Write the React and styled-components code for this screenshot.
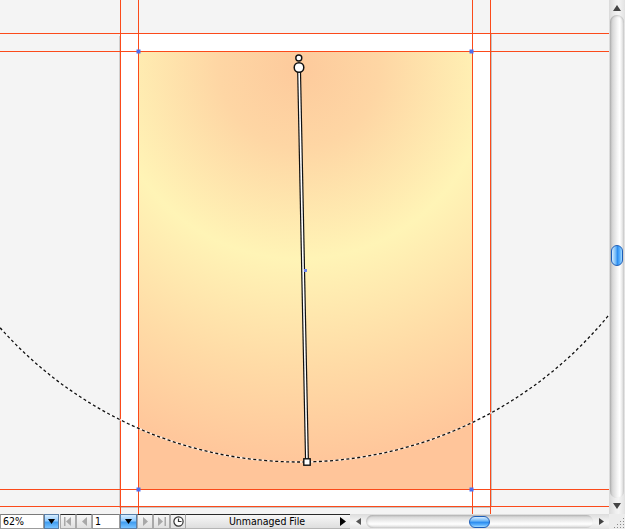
import React from "react";
import styled, { createGlobalStyle } from "styled-components";

const Global = createGlobalStyle`
  html, body { margin: 0; padding: 0; background: #f4f4f4; }
  body { font-family: "DejaVu Sans Condensed", "DejaVu Sans", sans-serif; }
`;

const GUIDE = "#fb4a1a";

const Root = styled.div`
  width: 625px;
  height: 529px;
  display: flex;
  flex-direction: column;
  overflow: hidden;
  background: #f4f4f4;
`;

const Main = styled.div`
  display: flex;
  height: 514px;
`;

const Canvas = styled.div`
  position: relative;
  width: 609px;
  height: 514px;
  overflow: hidden;
  background: #f4f4f4;
`;

const Page = styled.div`
  position: absolute;
  left: 120px;
  top: 34px;
  width: 370px;
  height: 472px;
  background: #fff;
  box-shadow: 2px 0 0 #c4c4c4, 0 2px 0 #c4c4c4, -1px 2px 0 #d0d0d0;
`;

const Art = styled.svg`
  position: absolute;
  left: 138px;
  top: 51px;
  display: block;
`;

const VGuide = styled.div`
  position: absolute;
  top: 0;
  bottom: 0;
  left: ${(p) => p.$x}px;
  width: 1px;
  background: ${GUIDE};
`;

const HGuide = styled.div`
  position: absolute;
  left: 0;
  right: 0;
  top: ${(p) => p.$y}px;
  height: 1px;
  background: ${GUIDE};
`;

const Overlay = styled.svg`
  position: absolute;
  left: 0;
  top: 0;
  display: block;
  pointer-events: none;
`;

const VScroll = styled.div`
  width: 16px;
  height: 514px;
  display: flex;
  flex-direction: column;
  align-items: center;
  background: linear-gradient(90deg, #dadada 0%, #eeeeee 40%, #f4f4f4 60%, #e2e2e2 100%);
`;

const ArrowCell = styled.div`
  width: 16px;
  height: ${(p) => p.$h || 15}px;
  display: flex;
  align-items: center;
  justify-content: center;
  flex: none;
`;

const VTrack = styled.div`
  flex: 1;
  width: 14px;
  border-radius: 7px;
  background: linear-gradient(90deg, #b9b9b9 0%, #d9d9d9 20%, #f6f6f6 55%, #ffffff 70%, #d6d6d6 100%);
  box-shadow: inset 0 1px 2px rgba(0, 0, 0, 0.2);
  display: flex;
  flex-direction: column;
  align-items: center;
  padding-top: 230px;
  box-sizing: border-box;
`;

const Thumb = styled.div`
  width: ${(p) => (p.$horizontal ? 21 : 12)}px;
  height: ${(p) => (p.$horizontal ? 12 : 21)}px;
  border-radius: 7px;
  border: 1px solid #1d5eb8;
  box-sizing: border-box;
  background: ${(p) =>
    p.$horizontal
      ? "linear-gradient(180deg, #d6ecff 0%, #79bdf8 35%, #2f8ff0 55%, #5fb4ff 80%, #a8dcff 100%)"
      : "linear-gradient(90deg, #d6ecff 0%, #79bdf8 35%, #2f8ff0 55%, #5fb4ff 80%, #a8dcff 100%)"};
  flex: none;
`;

const StatusBar = styled.div`
  display: flex;
  height: 15px;
  background: #e8e8e8;
  font-family: "DejaVu Sans Condensed", "DejaVu Sans", sans-serif;
  font-size: 10.5px;
  color: #000;
`;

const Field = styled.div`
  width: ${(p) => p.$w}px;
  height: 15px;
  box-sizing: border-box;
  background: #fff;
  border: 1px solid #9c9c9c;
  border-top-color: #7a7a7a;
  padding-left: 2px;
  line-height: 13px;
  flex: none;
`;

const BlueBtn = styled.div`
  width: ${(p) => p.$w}px;
  height: 15px;
  box-sizing: border-box;
  border: 1px solid #5a7ea6;
  background: linear-gradient(180deg, #d8eeff 0%, #8fcaff 45%, #3f9cf0 55%, #78c2ff 100%);
  display: flex;
  align-items: center;
  justify-content: center;
  flex: none;
`;

const NavBtn = styled.div`
  width: ${(p) => p.$w}px;
  height: 15px;
  box-sizing: border-box;
  border: 1px solid #a9a9a9;
  border-top-color: #2a2a2a;
  background: linear-gradient(180deg, #f6f6f6 0%, #e0e0e0 100%);
  display: flex;
  align-items: center;
  justify-content: center;
  flex: none;
`;

const Spacer = styled.div`
  width: ${(p) => p.$w}px;
  flex: none;
  background: #f0f0f0;
`;

const StatusField = styled.div`
  width: 164px;
  height: 15px;
  box-sizing: border-box;
  border-top: 1px solid #2a2a2a;
  border-bottom: 1px solid #b5b5b5;
  background: linear-gradient(180deg, #f7f7f7 0%, #dedede 100%);
  display: flex;
  align-items: center;
  padding: 0 4px 0 0;
  flex: none;
`;

const StatusText = styled.span`
  flex: 1;
  text-align: center;
  line-height: 13px;
  padding-left: 8px;
`;

const HScroll = styled.div`
  width: 259px;
  height: 15px;
  display: flex;
  align-items: center;
  background: linear-gradient(180deg, #dcdcdc 0%, #efefef 40%, #f5f5f5 60%, #e2e2e2 100%);
  flex: none;
`;

const HTrack = styled.div`
  flex: 1;
  height: 13px;
  border-radius: 7px;
  background: linear-gradient(180deg, #bdbdbd 0%, #dcdcdc 20%, #f6f6f6 55%, #ffffff 70%, #d6d6d6 100%);
  box-shadow: inset 1px 0 2px rgba(0, 0, 0, 0.2);
  display: flex;
  align-items: center;
  padding-left: 103px;
  box-sizing: border-box;
`;

const Corner = styled.div`
  width: 16px;
  height: 15px;
  background: #ececec;
  flex: none;
  display: flex;
  align-items: flex-end;
  justify-content: flex-end;
`;

const Tri = ({ dir, color = "#000", w = 7, h = 5 }) => {
  const pts = {
    down: `0,0 ${w},0 ${w / 2},${h}`,
    up: `0,${h} ${w},${h} ${w / 2},0`,
    right: `0,0 ${h},${w / 2} 0,${w}`,
    left: `${h},0 0,${w / 2} ${h},${w}`,
  }[dir];
  const horiz = dir === "left" || dir === "right";
  return (
    <svg width={horiz ? h : w} height={horiz ? w : h} style={{ display: "block" }}>
      <polygon points={pts} fill={color} />
    </svg>
  );
};

const FirstIcon = () => (
  <svg width="8" height="9" style={{ display: "block" }}>
    <rect x="0" y="0" width="1.5" height="9" fill="#a8a8a8" />
    <polygon points="7,0 2,4.5 7,9" fill="#a8a8a8" />
  </svg>
);
const LastIcon = () => (
  <svg width="8" height="9" style={{ display: "block" }}>
    <polygon points="0,0 5,4.5 0,9" fill="#a8a8a8" />
    <rect x="6.5" y="0" width="1.5" height="9" fill="#a8a8a8" />
  </svg>
);
const ClockIcon = () => (
  <svg width="11" height="11" style={{ display: "block" }}>
    <circle cx="5.5" cy="5.5" r="4.6" fill="#fff" stroke="#333" strokeWidth="1.2" />
    <path d="M5.5 2.5 V5.5 H8.5" fill="none" stroke="#333" strokeWidth="1.2" />
  </svg>
);
const Grip = () => (
  <svg width="12" height="12" style={{ display: "block" }}>
    {[
      [10, 2], [10, 5], [7, 5], [10, 8], [7, 8], [4, 8], [10, 11], [7, 11], [4, 11], [1, 11],
    ].map(([x, y], i) => (
      <rect key={i} x={x} y={y - 1} width="1" height="1" fill="#8a8a8a" />
    ))}
  </svg>
);

const handles = [
  [138, 51],
  [471, 51],
  [138, 489],
  [471, 489],
];

export default function App() {
  return (
    <Root>
      <Global />
      <Main>
        <Canvas>
          <Page />
          <Art width="334" height="438" viewBox="0 0 334 438">
            <defs>
              <radialGradient id="rg" gradientUnits="userSpaceOnUse" cx="161" cy="16" r="400">
                <stop offset="0" stopColor="#fdca9c" />
                <stop offset="0.2" stopColor="#fed6a4" />
                <stop offset="0.48" stopColor="#fff4b6" />
                <stop offset="0.75" stopColor="#ffdba6" />
                <stop offset="1" stopColor="#ffc59a" />
              </radialGradient>
            </defs>
            <rect x="0" y="0" width="334" height="438" fill="url(#rg)" />
          </Art>
          <VGuide $x={120} />
          <VGuide $x={138} />
          <VGuide $x={472} />
          <VGuide $x={490} />
          <HGuide $y={33} />
          <HGuide $y={51} />
          <HGuide $y={489} />
          <HGuide $y={506} />
          <Overlay width="609" height="514" viewBox="0 0 609 514">
            <circle cx="299" cy="62" r="400" fill="none" stroke="#ffffff" strokeWidth="1.6" opacity="0.7" />
            <circle cx="299" cy="62" r="400" fill="none" stroke="#111" strokeWidth="1.3" strokeDasharray="3 2.5" />
            <line x1="299" y1="67" x2="307" y2="462" stroke="#111" strokeWidth="4" />
            <line x1="299" y1="67" x2="307" y2="462" stroke="#fff" strokeWidth="1.6" />
            <circle cx="298.8" cy="58" r="3" fill="#fff" stroke="#111" strokeWidth="1.4" />
            <circle cx="299" cy="67.5" r="4.8" fill="#fff" stroke="#111" strokeWidth="1.5" />
            <rect x="303.8" y="458.8" width="6.4" height="6.4" fill="#fff" stroke="#111" strokeWidth="1.4" />
            {handles.map(([x, y], i) => (
              <rect key={i} x={x - 1.5} y={y - 1.5} width="4" height="4" fill="#4f6ef0" />
            ))}
            <rect x="304" y="269" width="3" height="3" fill="#6b86f2" />
          </Overlay>
        </Canvas>
        <VScroll>
          <ArrowCell $h={15}>
            <Tri dir="up" color="#444" w={8} h={6} />
          </ArrowCell>
          <VTrack>
            <Thumb />
          </VTrack>
          <ArrowCell $h={16}>
            <Tri dir="down" color="#444" w={8} h={6} />
          </ArrowCell>
        </VScroll>
      </Main>
      <StatusBar>
        <Field $w={44}>62%</Field>
        <BlueBtn $w={15}>
          <Tri dir="down" w={7} h={5} />
        </BlueBtn>
        <Spacer $w={1} />
        <NavBtn $w={16}>
          <FirstIcon />
        </NavBtn>
        <NavBtn $w={16}>
          <Tri dir="left" color="#a8a8a8" w={9} h={5} />
        </NavBtn>
        <Field $w={28}>1</Field>
        <BlueBtn $w={17}>
          <Tri dir="down" w={7} h={5} />
        </BlueBtn>
        <NavBtn $w={16}>
          <Tri dir="right" color="#a8a8a8" w={9} h={5} />
        </NavBtn>
        <NavBtn $w={17}>
          <LastIcon />
        </NavBtn>
        <NavBtn $w={16}>
          <ClockIcon />
        </NavBtn>
        <StatusField>
          <StatusText>Unmanaged File</StatusText>
          <Tri dir="right" w={9} h={6} />
        </StatusField>
        <HScroll>
          <ArrowCell $h={15}>
            <Tri dir="left" color="#555" w={7} h={5} />
          </ArrowCell>
          <HTrack>
            <Thumb $horizontal />
          </HTrack>
          <ArrowCell $h={15}>
            <Tri dir="right" color="#444" w={7} h={5} />
          </ArrowCell>
        </HScroll>
        <Corner>
          <Grip />
        </Corner>
      </StatusBar>
    </Root>
  );
}
